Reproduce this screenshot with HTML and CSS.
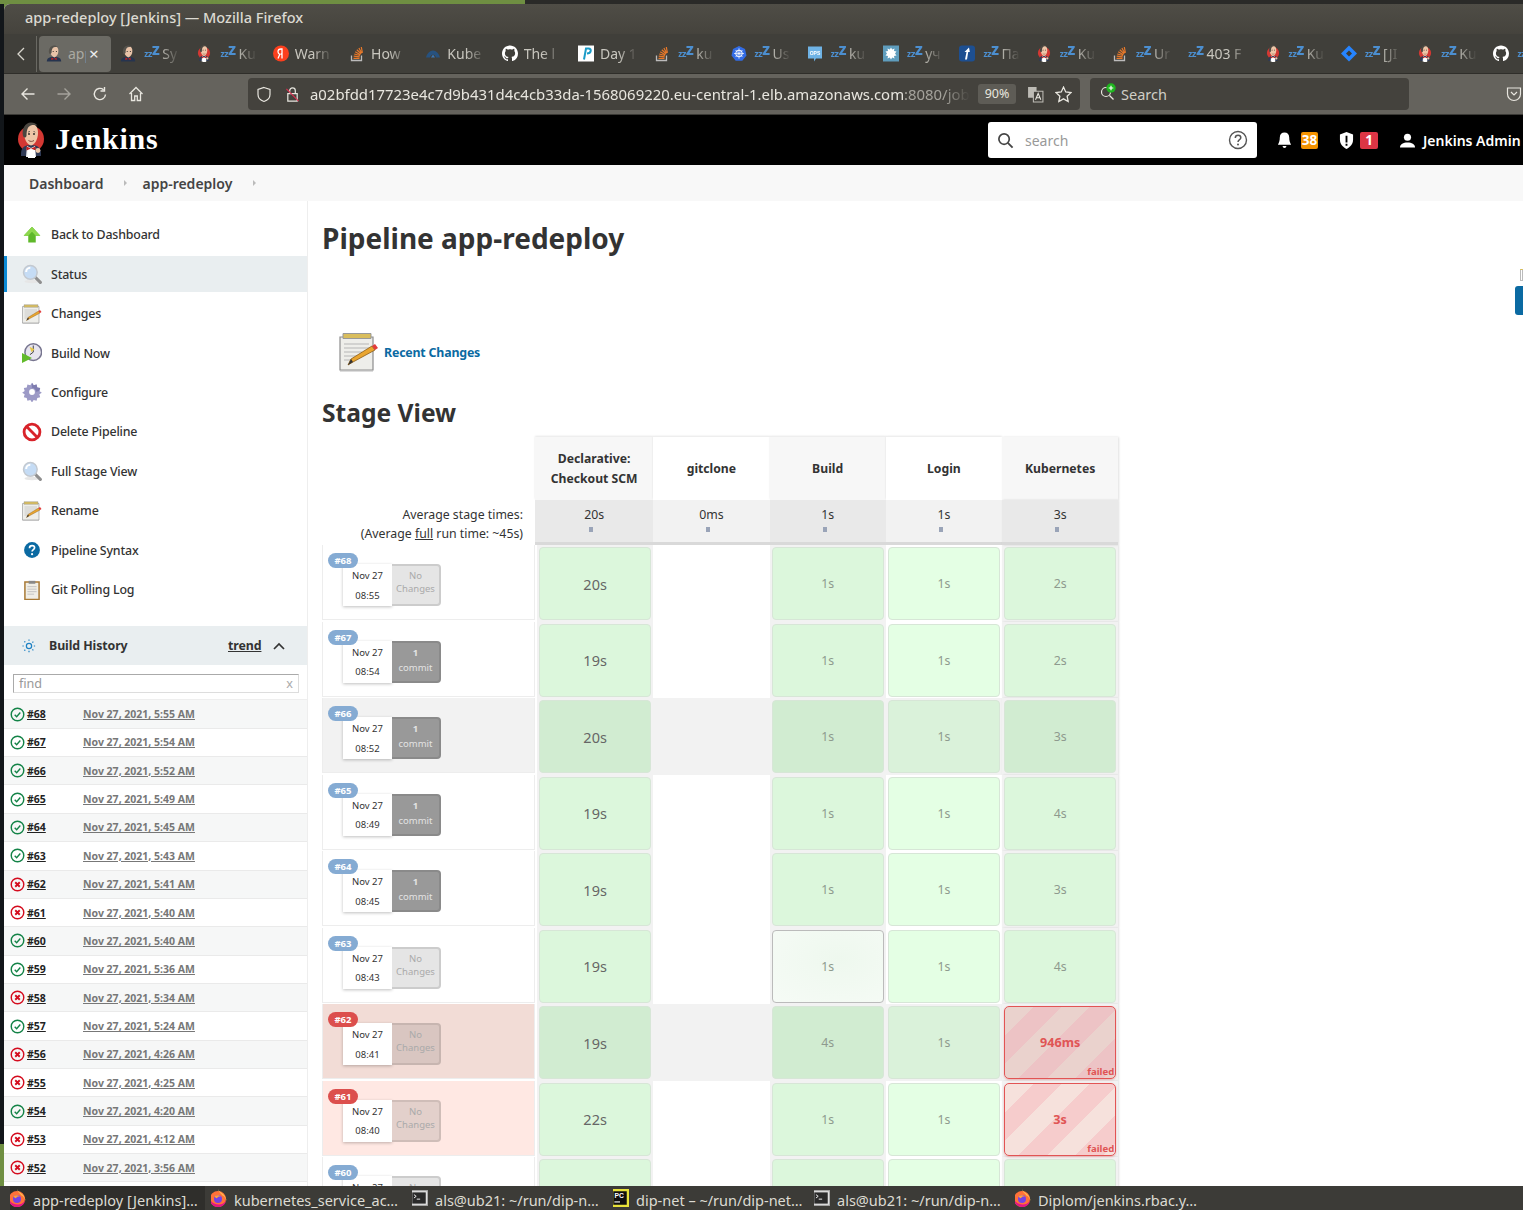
FILE: index.html
```html
<!DOCTYPE html>
<html lang="en">
<head>
<meta charset="utf-8">
<title>app-redeploy [Jenkins]</title>
<link rel="stylesheet" href="styles.css">
</head>
<body>
<svg class="defs" width="0" height="0">
  <symbol id="i-jenk" viewBox="0 0 26 36">
    <circle cx="13" cy="17" r="13" fill="#d33833"/>
    <path d="M3 32c0-6 3-9 10-9s10 3 10 9v2H3z" fill="#2f3a55"/>
    <path d="M9 24l4 2 4-2 1 11H8z" fill="#f4f4f4"/>
    <path d="M8.500 24.500l4.500 2 4.500-2v4l-4.500-2-4.500 2z" fill="#c8201f"/>
    <path d="M6 11C6 5 9 1.500 13 1.500s7 3.500 7 9.500c0 6-3 11.500-7 12.500-4-1-7-6.500-7-12.500z" fill="#eec6a8"/>
    <path d="M5 14C3.500 7 7 .5 13 .5c3 0 5 1 6.500 3-3-1-7-1-9 1.500-1.500 2-2 5-2 9-1 2-2.500 2-3.500 0z" fill="#4a4640"/>
    <path d="M10.500 18.500c1.700 1.200 3.800 1.200 5.500 0" fill="none" stroke="#7a4a3a" stroke-width="1"/>
    <path d="M12 9.500c-.8 0-1.500.3-2 .8M15.500 9.500c.8 0 1.300.3 1.700.8" stroke="#4a4640" stroke-width=".8" fill="none"/>
    <circle cx="11" cy="12" r=".9" fill="#222"/><circle cx="16" cy="12" r=".9" fill="#222"/>
    <path d="M10 28h7v8h-7z" fill="#fff"/>
    <circle cx="20" cy="28.500" r="2.400" fill="#eec6a8"/>
  </symbol>
  <symbol id="i-head" viewBox="0 0 20 20">
    <path d="M1 20c0-4 3-6 9-6s9 2 9 6z" fill="#26344f"/>
    <path d="M7 15l3 2 3-2 .5 3-3.500-1-3.500 1z" fill="#c8201f"/>
    <path d="M5 7c0-4 2-6.500 5.500-6.500S15.500 3 15.500 7c0 4-2 7-5 8-3-1-5.500-4-5.500-8z" fill="#e8c3a8"/>
    <path d="M4 10C2.500 5 5.500 0 10 0c2 0 4 .8 5 2.200-2.500-.7-5-.6-6.500 1C7.300 4.600 7 6.500 7 9c-1 1.800-2 2-3 1z" fill="#55524c"/>
    <circle cx="9" cy="7.500" r=".7" fill="#222"/><circle cx="13" cy="7.500" r=".7" fill="#222"/>
  </symbol>
  <symbol id="i-so" viewBox="0 0 16 16">
    <path d="M2.500 10v5h10v-5" fill="none" stroke="#bcbbbb" stroke-width="1.300"/>
    <path d="M4.500 12.800h6M4.700 10.700l6 .6M5.200 8.500l5.800 1.500M6.200 6.300l5.200 2.900M7.800 4.300l4.300 4M9.900 2.500l2.800 5.300M12.300 1.500l1.100 5.800" stroke="#e8792a" stroke-width="1.200" fill="none"/>
  </symbol>
  <symbol id="i-gh" viewBox="0 0 16 16">
    <path fill="#fff" d="M8 0C3.580 0 0 3.580 0 8c0 3.540 2.290 6.530 5.470 7.590.4.070.55-.17.55-.38 0-.19-.01-.82-.01-1.490-2.010.37-2.530-.49-2.690-.94-.09-.23-.48-.94-.82-1.130-.28-.15-.68-.52-.01-.53.63-.01 1.080.58 1.230.82.720 1.210 1.870.870 2.330.66.070-.52.280-.870.510-1.070-1.780-.2-3.640-.89-3.640-3.950 0-.870.310-1.590.820-2.150-.08-.2-.36-1.020.08-2.120 0 0 .67-.21 2.200.820.64-.18 1.320-.27 2-.27s1.360.09 2 .27c1.530-1.040 2.200-.82 2.200-.82.44 1.100.16 1.920.08 2.120.51.560.82 1.270.82 2.150 0 3.070-1.870 3.750-3.650 3.950.29.250.54.730.54 1.480 0 1.070-.01 1.930-.01 2.200 0 .21.150.46.550.38A8.010 8.010 0 0 0 16 8c0-4.420-3.580-8-8-8z"/>
  </symbol>
  <symbol id="i-ya" viewBox="0 0 16 16"><circle cx="8" cy="8" r="8" fill="#fc3f1d"/><path d="M9 13V3.500H8C6.200 3.500 5 4.600 5 6.200c0 1.300.6 2 1.700 2.700L5 13M9 8.500H7.600" fill="none" stroke="#fff" stroke-width="1.300"/></symbol>
  <symbol id="i-kube" viewBox="0 0 16 16"><path d="M1 12c1-4 4-7 7-7s6 3 7 7H11c-.5-2-2-3-3-3s-2.500 1-3 3z" fill="#27527f"/><path d="M8 9l-2 3h4z" fill="#3a76b5"/></symbol>
  <symbol id="i-p" viewBox="0 0 16 16"><path d="M0 0h16v16H0z" fill="#fff"/><path d="M6 14l2-11h2.500c2 0 2.500 1.300 2.200 2.500C12.300 7.300 11 8 9 8" fill="none" stroke="#1a9bc7" stroke-width="2"/></symbol>
  <symbol id="i-k8s" viewBox="0 0 16 16"><path d="M8 .5l6 2.900 1.500 6.500-4.200 5.300H4.700L.5 9.900 2 3.400z" fill="#326ce5"/><circle cx="8" cy="8" r="3.300" fill="none" stroke="#fff" stroke-width="1"/><path d="M8 2.800v10.400M3 8h10M4.500 4.500l7 7M11.500 4.500l-7 7" stroke="#fff" stroke-width=".7"/></symbol>
  <symbol id="i-ops" viewBox="0 0 16 16"><path d="M1 1h14v12H9l-2 3v-3H1z" fill="#6fb3e6"/><text x="8" y="9" font-size="5" font-weight="700" text-anchor="middle" fill="#fff" font-family="Liberation Sans">OPS</text></symbol>
  <symbol id="i-bug" viewBox="0 0 16 16"><path d="M0 0h16v16H0z" fill="#5f9dbd"/><path d="M8 2l1.200 2 2.300-1-.5 2.500 2.500.5-1.500 2 1.500 2-2.500.5.500 2.500-2.300-1L8 14l-1.200-2-2.300 1 .5-2.500L2.500 10 4 8 2.500 6 5 5.500 4.500 3l2.300 1z" fill="#fff"/></symbol>
  <symbol id="i-up" viewBox="0 0 16 16"><rect width="16" height="16" rx="3" fill="#1d4f91"/><path d="M6 14l1.500-7.500H5.500L10 2l.8 4.500H9.200L8 14z" fill="#fff"/></symbol>
  <symbol id="i-jira" viewBox="0 0 16 16"><path d="M8 0l8 8-8 8-8-8z" fill="#2684ff"/><path d="M8 5l3 3-3 3-3-3z" fill="#3c3b37"/></symbol>
  <symbol id="i-ff" viewBox="0 0 18 18">
    <circle cx="9" cy="10" r="8" fill="#ff7139"/>
    <path d="M9 0c1 2.500 3.500 3.500 5 5 2.500 2.500 3.500 5 3.500 7-1-3.500-2.500-5-4-5.500C12 4.500 9.500 3 9 0z" fill="#ffbd4f"/>
    <path d="M1 10c0 4.500 3.500 8 8 8s7-2.500 8-6c-2 2.500-4.500 3.500-7 3.500-4.500 0-8-2.500-9-5.500z" fill="#e31587"/>
    <circle cx="9" cy="10" r="4" fill="#7542e5"/>
    <path d="M5.500 7c2-1.200 4.500-1.200 6.500.6-1.800-.4-3.500 0-4 1.700C6.800 8.900 5.800 8.200 5.500 7z" fill="#ffa436"/>
  </symbol>
  <symbol id="i-term" viewBox="0 0 16 16"><rect x=".5" y="1.500" width="15" height="13" fill="#e8e8e8" stroke="#aaa"/><rect x="2" y="3" width="12" height="10" fill="#2a2a2a"/><path d="M3.500 5l2 1.500-2 1.500" stroke="#fff" fill="none" stroke-width=".8"/><path d="M6 9h3" stroke="#fff" stroke-width=".8"/></symbol>
  <symbol id="i-pc" viewBox="0 0 16 16"><path d="M0 0h16v16H0z" fill="#e8e23a"/><path d="M2 2h12v12H2z" fill="#0f0f0f"/><text x="3" y="8" font-size="6" font-weight="700" fill="#fff" font-family="Liberation Sans">PC</text><path d="M3 11.500h5" stroke="#fff" stroke-width="1"/></symbol>
  <symbol id="i-mag" viewBox="0 0 24 24">
    <ellipse cx="12" cy="21" rx="9" ry="2" fill="#e6e6e6"/>
    <path d="M15 15l7 7" stroke="#8f8f8f" stroke-width="3.800" stroke-linecap="round"/>
    <circle cx="10" cy="10" r="8.200" fill="#c5dcf5" stroke="#c3c9d0" stroke-width="1.800"/>
    <path d="M5 9.500c0-2.800 2.200-5 5-5" stroke="#fff" stroke-width="2.400" fill="none"/>
  </symbol>
  <symbol id="i-note" viewBox="0 0 40 40">
    <path d="M1 5h33v33H1z" fill="#eeeeea" stroke="#8d8d8d" stroke-width="1.200"/>
    <path d="M1 38h33v1.500H1z" fill="#bbb"/>
    <path d="M4 1.500h28v5H4z" fill="#d9bd5c" stroke="#999"/>
    <path d="M5 12h25M5 16h25M5 20h18M5 24h14M5 28h10" stroke="#b6b6b6" stroke-width="1.200"/>
    <path d="M9 33l3-6 21-13 3 4-22 12z" fill="#e9a52f" stroke="#8b5c16" stroke-width=".8"/>
    <path d="M33 14l3 4 3-2-3-4z" fill="#e23b3b"/>
    <path d="M9 33l3-6 2 3z" fill="#333"/>
  </symbol>
  <symbol id="i-ok" viewBox="0 0 16 16"><circle cx="8" cy="8" r="6.700" fill="none" stroke="#138347" stroke-width="1.500"/><path d="M5 8.200l2.100 2.100 3.900-4.400" fill="none" stroke="#138347" stroke-width="1.500"/></symbol>
  <symbol id="i-bad" viewBox="0 0 16 16"><circle cx="8" cy="8" r="6.700" fill="none" stroke="#d40c1e" stroke-width="1.500"/><path d="M5.600 5.600l4.800 4.800M10.400 5.600l-4.800 4.800" stroke="#d40c1e" stroke-width="2"/></symbol>
</svg>

<div class="window">
  <div class="titlebar">app-redeploy [Jenkins] — Mozilla Firefox</div>

  <div class="tabs">
    <div class="tab-back"><svg width="10" height="16" viewBox="0 0 10 16"><path d="M8 2L2 8l6 6" fill="none" stroke="#d8d6ce" stroke-width="1.300"/></svg></div>
    <div class="tab tab-on"><svg class="fav"><use href="#i-head"/></svg><span class="tab-t">app</span><span class="tab-x">×</span></div>
    <div class="tab"><svg class="fav"><use href="#i-head"/></svg><span class="zz">z<i>z</i><b>Z</b></span><span class="tab-t">Sy</span></div>
    <div class="tab"><svg class="fav"><use href="#i-jenk"/></svg><span class="zz">z<i>z</i><b>Z</b></span><span class="tab-t">Ku</span></div>
    <div class="tab"><svg class="fav"><use href="#i-ya"/></svg><span class="tab-t">Warn</span></div>
    <div class="tab"><svg class="fav"><use href="#i-so"/></svg><span class="tab-t">How</span></div>
    <div class="tab"><svg class="fav"><use href="#i-kube"/></svg><span class="tab-t">Kube</span></div>
    <div class="tab"><svg class="fav"><use href="#i-gh"/></svg><span class="tab-t">The l</span></div>
    <div class="tab"><svg class="fav"><use href="#i-p"/></svg><span class="tab-t">Day 1</span></div>
    <div class="tab"><svg class="fav"><use href="#i-so"/></svg><span class="zz">z<i>z</i><b>Z</b></span><span class="tab-t">ku</span></div>
    <div class="tab"><svg class="fav"><use href="#i-k8s"/></svg><span class="zz">z<i>z</i><b>Z</b></span><span class="tab-t">Us</span></div>
    <div class="tab"><svg class="fav"><use href="#i-ops"/></svg><span class="zz">z<i>z</i><b>Z</b></span><span class="tab-t">ku</span></div>
    <div class="tab"><svg class="fav"><use href="#i-bug"/></svg><span class="zz">z<i>z</i><b>Z</b></span><span class="tab-t">уч</span></div>
    <div class="tab"><svg class="fav"><use href="#i-up"/></svg><span class="zz">z<i>z</i><b>Z</b></span><span class="tab-t">Па</span></div>
    <div class="tab"><svg class="fav"><use href="#i-jenk"/></svg><span class="zz">z<i>z</i><b>Z</b></span><span class="tab-t">Ku</span></div>
    <div class="tab"><svg class="fav"><use href="#i-so"/></svg><span class="zz">z<i>z</i><b>Z</b></span><span class="tab-t">Ur</span></div>
    <div class="tab tab-nofav"><span class="zz">z<i>z</i><b>Z</b></span><span class="tab-t">403 F</span></div>
    <div class="tab"><svg class="fav"><use href="#i-jenk"/></svg><span class="zz">z<i>z</i><b>Z</b></span><span class="tab-t">Ku</span></div>
    <div class="tab"><svg class="fav"><use href="#i-jira"/></svg><span class="zz">z<i>z</i><b>Z</b></span><span class="tab-t">[JI</span></div>
    <div class="tab"><svg class="fav"><use href="#i-jenk"/></svg><span class="zz">z<i>z</i><b>Z</b></span><span class="tab-t">Ku</span></div>
    <div class="tab"><svg class="fav"><use href="#i-gh"/></svg><span class="zz">z<i>z</i><b>Z</b></span></div>
  </div>

  <div class="toolbar">
    <svg class="tb-ic" viewBox="0 0 16 16"><path d="M14.500 8H2M7.500 2.500L2 8l5.500 5.500" fill="none" stroke="#e8e6df" stroke-width="1.400"/></svg>
    <svg class="tb-ic tb-dim" viewBox="0 0 16 16"><path d="M1.500 8H14M8.500 2.500L14 8l-5.500 5.500" fill="none" stroke="#a5a39c" stroke-width="1.400"/></svg>
    <svg class="tb-ic" viewBox="0 0 16 16"><path d="M13.500 8.500A5.600 5.600 0 1 1 11.500 3.700M12.500 1v4h-4" fill="none" stroke="#e8e6df" stroke-width="1.400"/></svg>
    <svg class="tb-ic" viewBox="0 0 16 16"><path d="M1.500 8L8 1.500 14.500 8M3.500 7v7.500h3.200V10h2.600v4.500h3.200V7" fill="none" stroke="#e8e6df" stroke-width="1.300"/></svg>
    <div class="urlbar">
      <svg class="url-shield" viewBox="0 0 16 16"><path d="M8 1l6 2v5c0 4-3 6-6 7-3-1-6-3-6-7V3z" fill="none" stroke="#e8e6df" stroke-width="1.200"/></svg>
      <svg class="url-lock" viewBox="0 0 16 16"><path d="M3 7h10v8H3zM5 7V4a3 3 0 0 1 6 0v3" fill="none" stroke="#e8e6df" stroke-width="1.300"/><path d="M1.500 2l13 13" stroke="#d5304f" stroke-width="1.300"/></svg>
      <div class="url-text">a02bfdd17723e4c7d9b431d4c4cb33da-1568069220.eu-central-1.elb.amazonaws.com<span class="url-dim">:8080/job</span></div>
      <div class="url-zoom">90%</div>
      <svg class="url-tr" viewBox="0 0 16 16"><path d="M1 1h8v10H1z" fill="#bdbbb5"/><path d="M6 5h9v10H6z" fill="#44423d" stroke="#bdbbb5"/><path d="M8 13l2.500-6 2.500 6M9 11h3" fill="none" stroke="#e8e6df"/></svg>
      <svg class="url-star" viewBox="0 0 16 16"><path d="M8 1l2.100 4.600 5 .6-3.700 3.400 1 5L8 12.100 3.600 14.600l1-5L.9 6.200l5-.6z" fill="none" stroke="#e8e6df" stroke-width="1.200"/></svg>
    </div>
    <div class="searchbar">
      <svg class="sb-ic" viewBox="0 0 18 18"><circle cx="7" cy="9" r="4.500" fill="none" stroke="#e8e6df" stroke-width="1.200"/><path d="M10.500 12.500l4 4" stroke="#e8e6df" stroke-width="1.200"/><circle cx="12" cy="5" r="4.700" fill="#1fb51f"/><path d="M12 2.700v4.600M9.700 5h4.600" stroke="#fff" stroke-width="1.200"/></svg>
      <span>Search</span>
    </div>
    <svg class="tb-pocket" viewBox="0 0 16 16"><path d="M1.500 2h13v6a6.500 6.500 0 0 1-13 0z" fill="none" stroke="#e8e6df" stroke-width="1.200"/><path d="M5 6l3 3 3-3" fill="none" stroke="#e8e6df" stroke-width="1.200"/></svg>
  </div>

  <header class="jheader">
    <svg class="jlogo"><use href="#i-jenk"/></svg>
    <div class="jname">Jenkins</div>
    <div class="jsearch">
      <svg class="js-mag" viewBox="0 0 18 18"><circle cx="7.500" cy="7.500" r="5.500" fill="none" stroke="#444" stroke-width="1.800"/><path d="M11.500 11.500l5 5" stroke="#444" stroke-width="2"/></svg>
      <span class="js-ph">search</span>
      <svg class="js-help" viewBox="0 0 20 20"><circle cx="10" cy="10" r="8.500" fill="none" stroke="#555" stroke-width="1.400"/><path d="M7.300 8c0-1.700 1.200-2.700 2.800-2.700s2.700 1 2.700 2.400c0 2-2.800 2-2.800 4.300" fill="none" stroke="#555" stroke-width="1.500"/><circle cx="10" cy="14.500" r="1" fill="#555"/></svg>
    </div>
    <svg class="j-bell" viewBox="0 0 16 18"><path d="M8 1c-3 0-5 2-5 5 0 4-1 6-2 8h14c-1-2-2-4-2-8 0-3-2-5-5-5z" fill="#fff"/><path d="M6 15.500h4c0 1.500-1 2-2 2s-2-.5-2-2z" fill="#fff"/></svg>
    <span class="badge badge-or">38</span>
    <svg class="j-shield" viewBox="0 0 16 18"><path d="M8 0l7 2.500V8c0 5-3 8-7 10-4-2-7-5-7-10V2.500z" fill="#fff"/><path d="M7 4h2v7H7zM7 12.500h2v2H7z" fill="#000"/></svg>
    <span class="badge badge-red">1</span>
    <svg class="j-user" viewBox="0 0 16 16"><circle cx="8" cy="4.500" r="3.800" fill="#fff"/><path d="M0 15.500c0-4 3.500-5.500 8-5.500s8 1.500 8 5.500z" fill="#fff"/></svg>
    <span class="j-admin">Jenkins Admin</span>
  </header>

  <nav class="crumbs">
    <a class="crumb">Dashboard</a><span class="crumb-sep"></span>
    <a class="crumb">app-redeploy</a><span class="crumb-sep"></span>
  </nav>

  <div class="page">
    <aside class="side">
      <ul class="tasks">
        <li class="task"><svg class="t-ic" viewBox="0 0 24 24"><path d="M12 2l10 11h-5.500v8h-9v-8H2z" fill="#5fb82a"/><path d="M12 2l10 11h-5.500L12 8l-4.500 5H2z" fill="#8ed84e"/></svg>Back to Dashboard</li>
        <li class="task task-on"><svg class="t-ic"><use href="#i-mag"/></svg>Status</li>
        <li class="task"><svg class="t-ic"><use href="#i-note"/></svg>Changes</li>
        <li class="task"><svg class="t-ic" viewBox="0 0 24 24"><circle cx="13.500" cy="11" r="10" fill="#e7e5ef" stroke="#77758f" stroke-width="1.800"/><path d="M13.500 3V11l-4 3" fill="none" stroke="#444" stroke-width="1.200"/><path d="M9 4.500l6 3-3.500 3.500z" fill="#e8c84a"/><path d="M0 12l12 6-12 6z" fill="#62bb2b"/></svg>Build Now</li>
        <li class="task"><svg class="t-ic" viewBox="0 0 24 24"><path d="M12 1l2 3 3.500-1 .8 3.500 3.500.8-1 3.500 3 2-3 2 1 3.500-3.500.8-.8 3.500-3.500-1-2 3-2-3-3.500 1-.8-3.500-3.500-.8 1-3.500-3-2 3-2-1-3.500 3.500-.8.8-3.500 3.500 1z" fill="#9c9ac6"/><path d="M12 1l2 3 3.500-1 .8 3.500 3.500.8-1 3.500-4 1a5 5 0 0 0-5-5z" fill="#7f7db0"/><circle cx="12" cy="12" r="3.500" fill="#fff"/></svg>Configure</li>
        <li class="task"><svg class="t-ic" viewBox="0 0 24 24"><circle cx="12" cy="12" r="9.500" fill="#fff" stroke="#d8232a" stroke-width="3.400"/><path d="M5.500 5.500l13 13" stroke="#d8232a" stroke-width="3.400"/></svg>Delete Pipeline</li>
        <li class="task"><svg class="t-ic"><use href="#i-mag"/></svg>Full Stage View</li>
        <li class="task"><svg class="t-ic"><use href="#i-note"/></svg>Rename</li>
        <li class="task"><svg class="t-ic" viewBox="0 0 24 24"><circle cx="12" cy="12" r="9.500" fill="#0b6aa2"/><path d="M9 9.800c0-1.800 1.200-3 3.100-3s3 1.200 3 2.600c0 2.200-3 2.100-3 4.400" fill="none" stroke="#fff" stroke-width="2"/><circle cx="12.100" cy="17" r="1.300" fill="#fff"/></svg>Pipeline Syntax</li>
        <li class="task"><svg class="t-ic" viewBox="0 0 24 24"><path d="M3.500 2.500h17v21h-17z" fill="#f0eee6" stroke="#a97a35" stroke-width="1.800"/><path d="M8 1h8v3.500H8z" fill="#888"/><path d="M6.500 8h11M6.500 11h11M6.500 14h11M6.500 17h8" stroke="#bbb"/></svg>Git Polling Log</li>
      </ul>

      <div class="bh-head">
        <svg class="bh-ic" viewBox="0 0 16 16"><circle cx="8" cy="8" r="3" fill="none" stroke="#1f82c4" stroke-width="1.400"/><path d="M8 0.500v2M8 13.500v2M.5 8h2M13.500 8h2M2.700 2.700l1.400 1.400M11.900 11.900l1.400 1.400M2.700 13.300l1.400-1.400M11.900 4.100l1.400-1.400" stroke="#1f82c4" stroke-width="1.400" stroke-dasharray="1.500 .5"/></svg>
        <span class="bh-title">Build History</span>
        <a class="bh-trend">trend</a>
        <svg class="bh-chev" viewBox="0 0 12 8"><path d="M1 7l5-5 5 5" fill="none" stroke="#333" stroke-width="1.700"/></svg>
      </div>
      <div class="bh-find"><span>find</span><span class="bh-x">x</span></div>
      <ul class="hist">
        <li class="h-row"><svg class="h-ic"><use href="#i-ok"/></svg><a class="h-num">#68</a><a class="h-date">Nov 27, 2021, 5:55 AM</a></li>
        <li class="h-row"><svg class="h-ic"><use href="#i-ok"/></svg><a class="h-num">#67</a><a class="h-date">Nov 27, 2021, 5:54 AM</a></li>
        <li class="h-row"><svg class="h-ic"><use href="#i-ok"/></svg><a class="h-num">#66</a><a class="h-date">Nov 27, 2021, 5:52 AM</a></li>
        <li class="h-row"><svg class="h-ic"><use href="#i-ok"/></svg><a class="h-num">#65</a><a class="h-date">Nov 27, 2021, 5:49 AM</a></li>
        <li class="h-row"><svg class="h-ic"><use href="#i-ok"/></svg><a class="h-num">#64</a><a class="h-date">Nov 27, 2021, 5:45 AM</a></li>
        <li class="h-row"><svg class="h-ic"><use href="#i-ok"/></svg><a class="h-num">#63</a><a class="h-date">Nov 27, 2021, 5:43 AM</a></li>
        <li class="h-row"><svg class="h-ic"><use href="#i-bad"/></svg><a class="h-num">#62</a><a class="h-date">Nov 27, 2021, 5:41 AM</a></li>
        <li class="h-row"><svg class="h-ic"><use href="#i-bad"/></svg><a class="h-num">#61</a><a class="h-date">Nov 27, 2021, 5:40 AM</a></li>
        <li class="h-row"><svg class="h-ic"><use href="#i-ok"/></svg><a class="h-num">#60</a><a class="h-date">Nov 27, 2021, 5:40 AM</a></li>
        <li class="h-row"><svg class="h-ic"><use href="#i-ok"/></svg><a class="h-num">#59</a><a class="h-date">Nov 27, 2021, 5:36 AM</a></li>
        <li class="h-row"><svg class="h-ic"><use href="#i-bad"/></svg><a class="h-num">#58</a><a class="h-date">Nov 27, 2021, 5:34 AM</a></li>
        <li class="h-row"><svg class="h-ic"><use href="#i-ok"/></svg><a class="h-num">#57</a><a class="h-date">Nov 27, 2021, 5:24 AM</a></li>
        <li class="h-row"><svg class="h-ic"><use href="#i-bad"/></svg><a class="h-num">#56</a><a class="h-date">Nov 27, 2021, 4:26 AM</a></li>
        <li class="h-row"><svg class="h-ic"><use href="#i-bad"/></svg><a class="h-num">#55</a><a class="h-date">Nov 27, 2021, 4:25 AM</a></li>
        <li class="h-row"><svg class="h-ic"><use href="#i-ok"/></svg><a class="h-num">#54</a><a class="h-date">Nov 27, 2021, 4:20 AM</a></li>
        <li class="h-row"><svg class="h-ic"><use href="#i-bad"/></svg><a class="h-num">#53</a><a class="h-date">Nov 27, 2021, 4:12 AM</a></li>
        <li class="h-row"><svg class="h-ic"><use href="#i-bad"/></svg><a class="h-num">#52</a><a class="h-date">Nov 27, 2021, 3:56 AM</a></li>
      </ul>
    </aside>

    <main class="main">
      <h1 class="m-title">Pipeline app-redeploy</h1>
      <div class="m-edge"><span class="m-edge-a"></span><span class="m-edge-b"></span></div>
      <div class="m-recent"><svg class="m-note"><use href="#i-note"/></svg><a class="m-link">Recent Changes</a></div>
      <h2 class="m-h2">Stage View</h2>

      <div class="stage">
        <div class="s-head">
          <div class="sh-blank"></div>
          <div class="sh sh-o sh-first">Declarative:<br>Checkout SCM</div>
          <div class="sh">gitclone</div>
          <div class="sh sh-o">Build</div>
          <div class="sh">Login</div>
          <div class="sh sh-o">Kubernetes</div>
        </div>
        <div class="s-avg">
          <div class="sa-label">Average stage times:<br>(Average <u>full</u> run time: ~45s)</div>
          <div class="sa sa-o sa-first">20s<i class="sliver"></i></div>
          <div class="sa">0ms<i class="sliver"></i></div>
          <div class="sa sa-o">1s<i class="sliver"></i></div>
          <div class="sa">1s<i class="sliver"></i></div>
          <div class="sa sa-o">3s<i class="sliver"></i></div>
        </div>

        <div class="s-row">
          <div class="r-head"><span class="r-badge">#68</span><div class="r-card"><div class="r-date">Nov 27<br>08:55</div><div class="r-none">No<br>Changes</div></div></div>
          <div class="col col-o"><div class="cell cell-a big">20s</div></div><div class="col"></div>
          <div class="col col-o"><div class="cell cell-a">1s</div></div><div class="col"><div class="cell cell-b">1s</div></div>
          <div class="col col-o"><div class="cell cell-a">2s</div></div>
        </div>
        <div class="s-row">
          <div class="r-head"><span class="r-badge">#67</span><div class="r-card"><div class="r-date">Nov 27<br>08:54</div><div class="r-commit"><b>1</b><br>commit</div></div></div>
          <div class="col col-o"><div class="cell cell-a big">19s</div></div><div class="col"></div>
          <div class="col col-o"><div class="cell cell-a">1s</div></div><div class="col"><div class="cell cell-b">1s</div></div>
          <div class="col col-o"><div class="cell cell-a">2s</div></div>
        </div>
        <div class="s-row row-hover">
          <div class="r-head"><span class="r-badge">#66</span><div class="r-card"><div class="r-date">Nov 27<br>08:52</div><div class="r-commit"><b>1</b><br>commit</div></div></div>
          <div class="col col-o"><div class="cell cell-a big">20s</div></div><div class="col"></div>
          <div class="col col-o"><div class="cell cell-a">1s</div></div><div class="col"><div class="cell cell-b">1s</div></div>
          <div class="col col-o"><div class="cell cell-a">3s</div></div>
        </div>
        <div class="s-row">
          <div class="r-head"><span class="r-badge">#65</span><div class="r-card"><div class="r-date">Nov 27<br>08:49</div><div class="r-commit"><b>1</b><br>commit</div></div></div>
          <div class="col col-o"><div class="cell cell-a big">19s</div></div><div class="col"></div>
          <div class="col col-o"><div class="cell cell-a">1s</div></div><div class="col"><div class="cell cell-b">1s</div></div>
          <div class="col col-o"><div class="cell cell-a">4s</div></div>
        </div>
        <div class="s-row">
          <div class="r-head"><span class="r-badge">#64</span><div class="r-card"><div class="r-date">Nov 27<br>08:45</div><div class="r-commit"><b>1</b><br>commit</div></div></div>
          <div class="col col-o"><div class="cell cell-a big">19s</div></div><div class="col"></div>
          <div class="col col-o"><div class="cell cell-a">1s</div></div><div class="col"><div class="cell cell-b">1s</div></div>
          <div class="col col-o"><div class="cell cell-a">3s</div></div>
        </div>
        <div class="s-row">
          <div class="r-head"><span class="r-badge">#63</span><div class="r-card"><div class="r-date">Nov 27<br>08:43</div><div class="r-none">No<br>Changes</div></div></div>
          <div class="col col-o"><div class="cell cell-a big">19s</div></div><div class="col"></div>
          <div class="col col-o"><div class="cell cell-h">1s</div></div><div class="col"><div class="cell cell-b">1s</div></div>
          <div class="col col-o"><div class="cell cell-a">4s</div></div>
        </div>
        <div class="s-row row-fail-h">
          <div class="r-head"><span class="r-badge r-badge-f">#62</span><div class="r-card"><div class="r-date">Nov 27<br>08:41</div><div class="r-none">No<br>Changes</div></div></div>
          <div class="col col-o"><div class="cell cell-a big">19s</div></div><div class="col"></div>
          <div class="col col-o"><div class="cell cell-a">4s</div></div><div class="col"><div class="cell cell-b">1s</div></div>
          <div class="col col-o"><div class="cell cell-f">946ms<span class="failed">failed</span></div></div>
        </div>
        <div class="s-row row-fail">
          <div class="r-head"><span class="r-badge r-badge-f">#61</span><div class="r-card"><div class="r-date">Nov 27<br>08:40</div><div class="r-none">No<br>Changes</div></div></div>
          <div class="col col-o"><div class="cell cell-a big">22s</div></div><div class="col"></div>
          <div class="col col-o"><div class="cell cell-a">1s</div></div><div class="col"><div class="cell cell-b">1s</div></div>
          <div class="col col-o"><div class="cell cell-f">3s<span class="failed">failed</span></div></div>
        </div>
        <div class="s-row">
          <div class="r-head"><span class="r-badge">#60</span><div class="r-card"><div class="r-date">Nov 27<br>08:39</div><div class="r-none">No<br>Changes</div></div></div>
          <div class="col col-o"><div class="cell cell-a big">19s</div></div><div class="col"></div>
          <div class="col col-o"><div class="cell cell-a">1s</div></div><div class="col"><div class="cell cell-b">1s</div></div>
          <div class="col col-o"><div class="cell cell-a">3s</div></div>
        </div>
      </div>
    </main>
  </div>
</div>

<footer class="taskbar">
  <div class="tk tk-on"><svg class="tk-ic"><use href="#i-ff"/></svg><span>app-redeploy [Jenkins]…</span></div>
  <div class="tk"><svg class="tk-ic"><use href="#i-ff"/></svg><span>kubernetes_service_ac…</span></div>
  <div class="tk"><svg class="tk-ic"><use href="#i-term"/></svg><span>als@ub21: ~/run/dip-n…</span></div>
  <div class="tk"><svg class="tk-ic"><use href="#i-pc"/></svg><span>dip-net – ~/run/dip-net…</span></div>
  <div class="tk"><svg class="tk-ic"><use href="#i-term"/></svg><span>als@ub21: ~/run/dip-n…</span></div>
  <div class="tk"><svg class="tk-ic"><use href="#i-ff"/></svg><span>Diplom/jenkins.rbac.y…</span></div>
</footer>
</body>
</html>
```
FILE: styles.css
```css
* { box-sizing: border-box; }
html, body { margin: 0; height: 100%; }
body {
  height: 1210px; width: 1523px; overflow: hidden;
  display: flex; flex-direction: column;
  font-family: "Noto Sans", "Open Sans", sans-serif;
  background: #6f8f42;
  color: #333;
}
.defs { position: absolute; }
ul { list-style: none; margin: 0; padding: 0; }
a { color: inherit; }

.window {
  flex: 1; min-height: 0; margin: 4px 0 0 4px;
  display: flex; flex-direction: column; overflow: hidden;
  background: #fff;
  border-top-left-radius: 6px;
}
body::before {
  content: ""; position: absolute; left: 525px; right: 0; top: 0; height: 4px; background: #2a2a28;
}
body::after {
  content: ""; position: absolute; left: 0; width: 4px; top: 4px; height: 1140px; background: #12161a;
}

.titlebar {
  height: 30px; flex: none; padding-left: 21px;
  background: linear-gradient(#4f4d46, #45433d);
  color: #dcdad2; font-size: 14.500px; line-height: 27px; font-weight: 500; white-space: nowrap;
}

.tabs {
  height: 40px; flex: none; display: flex; align-items: center;
  background: #403f3a; border-bottom: 1px solid #2f2e2a;
}
.tab-back {
  width: 33px; flex: none; height: 36px; padding-left: 12px;
  display: flex; align-items: center;
  border-right: 1px solid #6a6963;
}
.tab {
  width: 76.300px; flex: none; height: 36px; padding: 0 2px 0 7px;
  display: flex; align-items: center; overflow: hidden; white-space: nowrap;
  color: #c8c6be; font-size: 14px;
  -webkit-mask-image: linear-gradient(90deg, #000 62%, transparent 88%);
  mask-image: linear-gradient(90deg, #000 62%, transparent 88%);
}
.tab-nofav { padding-left: 5px; }
.tab-on {
  background: #6b6a64; border-radius: 4px; width: 72px; margin: 0 2.150px 0 2px;
  -webkit-mask-image: none; mask-image: none; position: relative;
}
.fav { width: 16px; height: 17px; flex: none; margin-right: 6px; }
.zz { color: #4c8fd0; font-size: 8px; font-weight: 700; line-height: 1; flex: none; margin-right: 3px; margin-left: 2px; align-self: center; letter-spacing: -.4px; }
.zz i { font-style: normal; font-size: 9.500px; }
.zz b { font-size: 12.500px; position: relative; top: -2px; }
.tab-t { overflow: hidden; }
.tab-on .tab-t { width: 18px; color: #aaa9a2; flex: none; }
.tab-x { color: #eee; font-size: 17px; margin-left: 3px; line-height: 1; }

.toolbar {
  height: 41px; flex: none; display: flex; align-items: center;
  padding-left: 16px;
  background: #65635d; border-bottom: 1px solid #3a3935;
}
.tb-ic { width: 16px; height: 16px; flex: none; margin-right: 20px; }
.urlbar {
  width: 832px; height: 32px; margin-left: 84px; flex: none;
  display: flex; align-items: center;
  background: #44423d; border-radius: 4px; padding: 0 8px;
  color: #e8e6df; font-size: 14.900px;
}
.url-shield { width: 16px; height: 17px; flex: none; }
.url-lock { width: 15px; height: 17px; flex: none; margin-left: 13px; }
.url-text { flex: none; width: 660px; margin-left: 10px; overflow: hidden; white-space: nowrap;
  -webkit-mask-image: linear-gradient(90deg, #000 96%, transparent 100%);
  mask-image: linear-gradient(90deg, #000 96%, transparent 100%);
}
.url-dim { color: #a5a39c; }
.url-zoom { width: 38px; height: 20px; margin-left: 8px; flex: none; background: #5e5c56; border-radius: 3px; font-size: 12.500px; text-align: center; line-height: 20px; }
.url-tr { width: 17px; height: 17px; flex: none; margin-left: 11px; }
.url-star { width: 17px; height: 17px; flex: none; margin-left: 11px; }
.searchbar {
  width: 319px; height: 32px; margin-left: 10px; flex: none;
  display: flex; align-items: center; padding-left: 9px;
  background: #44423d; border-radius: 4px; color: #d0cec6; font-size: 14.500px;
}
.sb-ic { width: 18px; height: 18px; margin-right: 4px; position: relative; top: -2px; }
.tb-pocket { width: 16px; height: 16px; margin-left: 97px; flex: none; }

.jheader {
  height: 50px; flex: none; display: flex; align-items: center;
  background: #000; color: #fff; padding-left: 14px;
}
.jlogo { width: 26px; height: 36px; flex: none; }
.jname {
  margin-left: 11px; width: 933px; flex: none;
  font-family: "Liberation Serif", serif; font-weight: 700; font-size: 30px; letter-spacing: .7px; line-height: 34px; margin-top: -2px;
}
.jsearch {
  width: 269px; height: 36px; flex: none; background: #fff; border-radius: 3px;
  display: flex; align-items: center; padding-left: 9px;
}
.js-mag { width: 17px; height: 17px; flex: none; }
.js-ph { color: #999; font-size: 14px; margin-left: 11px; width: 202px; flex: none; }
.js-help { width: 20px; height: 20px; flex: none; margin-left: 1px; }
.j-bell { width: 15px; height: 18px; margin-left: 20px; flex: none; }
.badge { height: 17px; border-radius: 2px; color: #fff; font-weight: 700; font-size: 13.500px; line-height: 17px; text-align: center; flex: none; }
.badge-or { width: 17px; background: #f59300; margin-left: 9px; }
.j-shield { width: 15px; height: 19px; margin-left: 21px; flex: none; }
.badge-red { width: 18px; background: #dc3545; margin-left: 6px; }
.j-user { width: 15px; height: 15px; margin-left: 22px; flex: none; }
.j-admin { margin-left: 8px; font-size: 14px; font-weight: 600; white-space: nowrap; }

.crumbs {
  height: 36px; flex: none; display: flex; align-items: center;
  padding-left: 25px; background: #f8f8f8; color: #444; font-size: 14px; font-weight: 600;
}
.crumb-sep { width: 0; height: 0; border: 3px solid transparent; border-left: 3px solid #bbb; margin: 0 12px 0 21px; }
.crumb-sep:last-child { margin-left: 21px; }

.page { flex: 1; min-height: 0; display: flex; overflow: hidden; }
.side { width: 304px; flex: none; border-right: 1px solid #eee; display: flex; flex-direction: column; }
.tasks { padding-top: 14px; }
.task {
  height: 39.450px; display: flex; align-items: center; padding-left: 18px;
  font-size: 12.400px; letter-spacing: -.18px; font-weight: 500; color: #333; white-space: nowrap;
}
.t-ic { width: 20px; height: 20px; flex: none; margin-right: 9px; }
.task-on { background: linear-gradient(#e9eef0, #e9eef0) no-repeat 0 1.500px / 100% 36px; position: relative; }
.task-on::before { content: ""; position: absolute; left: 0; top: 1.500px; height: 36px; width: 3px; background: #0b8ad6; }

.bh-head {
  height: 39px; margin-top: 17px; flex: none; display: flex; align-items: center;
  background: #e9eef0; padding-left: 18px; font-size: 12.400px; letter-spacing: -.1px; font-weight: 700;
}
.bh-ic { width: 14px; height: 14px; flex: none; }
.bh-title { margin-left: 13px; width: 179px; flex: none; color: #333; }
.bh-trend { text-decoration: underline; width: 45px; flex: none; }
.bh-chev { width: 12px; height: 8px; flex: none; margin-left: 0; }
.bh-find {
  margin: 9px 8px 6px 9px; height: 19px; flex: none;
  display: flex; justify-content: space-between; align-items: center;
  padding: 0 5px; font-size: 12.600px; color: #999;
  border: 1px solid #ddd; border-top-color: #aaa; border-left-color: #aaa;
}
.bh-x { color: #aaa; }
.hist { border-top: 1px solid #eee; }
.h-row {
  height: 28.360px; display: flex; align-items: center; padding-left: 6px;
  border-bottom: 1px solid #eaeaea; font-size: 10.500px; font-weight: 700;
}
.h-row:nth-child(odd) { background: #f6f7f7; }
.h-ic { width: 15px; height: 15px; flex: none; margin-right: 2px; }
.h-num { width: 56px; text-decoration: underline; color: #222; flex: none; }
.h-date { text-decoration: underline; color: #777; white-space: nowrap; }

.main { flex: 1; min-width: 0; position: relative; padding-left: 14px; overflow: hidden; }
.m-title { margin: 18px 0 0; font-size: 28px; line-height: 38px; font-weight: 700; color: #333; white-space: nowrap; }
.m-edge { position: absolute; right: 0; top: 68px; width: 8px; }
.m-edge-a { display: block; height: 12px; border: 1px solid #bbb; border-top-color: #e0c040; margin-left: 5px; }
.m-edge-b { display: block; height: 29px; margin-top: 5px; background: #0b6aa2; border-radius: 3px 0 0 3px; }
.m-recent { display: flex; align-items: center; margin-top: 74px; padding-left: 17px; height: 41px; }
.m-note { width: 40px; height: 40px; flex: none; margin-right: 5px; }
.m-link { color: #0b6aa2; font-size: 12.400px; letter-spacing: -.2px; font-weight: 700; position: relative; top: 1px; }
.m-h2 { margin: 24px 0 0; font-size: 24.600px; line-height: 34px; font-weight: 700; color: #333; }

.stage { margin-top: 7px; width: 797px; }
.s-head, .s-avg, .s-row { display: grid; grid-template-columns: 215px repeat(5, 116.250px); }
.sh {
  height: 63px; display: flex; align-items: center; justify-content: center; text-align: center;
  font-size: 12.200px; font-weight: 700; line-height: 19.500px; color: #333;
  background: #fff; box-shadow: 0 -1px 2px rgba(0,0,0,.1);
}
.sh-o { background: #f7f7f7; }
.sh-first, .sa-first { margin-left: -2px; }
.s-avg { height: 45.300px; }
.sa-label { text-align: right; padding: 5px 14px 0 0; font-size: 12.300px; line-height: 19px; color: #333; white-space: nowrap; margin-left: -20px; }
.sa {
  background: #f2f2f2; font-size: 12.300px; color: #333; text-align: center; padding-top: 6px; line-height: 18px;
  border-bottom: 3px solid #d9d9d9; position: relative;
}
.sa-o { background: #e9e9e9; }
.sliver { display: block; width: 4px; height: 5px; background: #9aa4b8; margin: 3px auto 0; position: relative; left: -3px; }
.s-row { height: 76.500px; }
.r-head {
  position: relative; margin: 0 2px 1.400px 0; background: #fff;
  border: 1px solid #ededed; border-top: 0;
}
.r-badge {
  position: absolute; left: 5px; top: 8px; height: 15px; width: 30px; border-radius: 8px;
  background: #85abd3; color: #fff; font-size: 9.500px; font-weight: 700; text-align: center; line-height: 15px; z-index: 1;
}
.r-badge-f { background: #dc4f4d; }
.r-card { position: absolute; left: 20px; top: 19px; width: 98px; height: 42px; display: flex; font-size: 9.500px; text-align: center; }
.r-date { width: 49px; background: #fff; color: #333; line-height: 19.500px; padding-top: 2px; box-shadow: 0 1px 3px rgba(0,0,0,.25); }
.r-none, .r-commit { width: 49px; border: 2px solid #ccc; border-left: 0; border-radius: 0 4px 4px 0; line-height: 13px; padding-top: 3px; }
.r-none { background: #e5e5e5; color: #aaa; }
.r-commit { background: #999; border-color: #8a8a8a; color: #e3e3e3; line-height: 15px; padding-top: 2px; }
.col { background: #fff; padding: 2px 2px 1.400px; }
.col-o { background: #f2f2f2; }
.s-row .col:last-child, .sa:last-child, .sh:last-child { box-shadow: 1px 0 2px rgba(0,0,0,.12); }
.cell {
  height: 100%; border: 1px solid #d7e6d7; border-radius: 4px;
  display: flex; align-items: center; justify-content: center;
  font-size: 12.300px; color: #8e9a8e; position: relative;
}
.cell-a { background: #dcf7dc; }
.cell-b { background: #e4ffe4; }
.big { font-size: 14.500px; color: #666; }
.cell-h { background: radial-gradient(ellipse at 60% 40%, #eef8ee, #f6fbf6); border-color: #bbb; }
.cell-f {
  border: 1.500px solid #e25454; border-radius: 5px; color: #e05555; font-weight: 700; font-size: 12.600px;
  box-shadow: 0 1px 2px rgba(220,80,80,.4);
  background: repeating-linear-gradient(135deg, #f6e1dc 0 20px, #f6cccc 20px 40px);
}
.failed { position: absolute; right: 1px; bottom: 0; font-size: 9.600px; line-height: 13px; }
.row-hover .r-head { background: #f2f2f2; }
.row-hover .col { background: #f2f2f2; }
.row-hover .cell-a { background: #d1ecd1; }
.row-hover .cell-b { background: #daf2da; }
.row-fail .r-head { background: #ffe8e3; }
.row-fail .r-none { background: #e3d0cb; border-color: #cfbdb8; }
.row-fail-h .r-head { background: #f2dcd6; }
.row-fail-h .col { background: #f2f2f2; }
.row-fail-h .cell-a { background: #d1ecd1; }
.row-fail-h .cell-b { background: #daf2da; }
.row-fail-h .r-none { background: #d9c6c1; border-color: #c7b5b0; }
.row-fail-h .cell-f { background: repeating-linear-gradient(135deg, #ead2cd 0 20px, #edc3c5 20px 40px); }

.taskbar {
  height: 24px; flex: none; display: flex; padding-left: 10px;
  background: #3c3b37; color: #dddbd3; font-size: 14.500px; white-space: nowrap;
}
.tk { width: 201px; flex: none; display: flex; align-items: center; overflow: hidden; }
.tk span { position: relative; top: 2px; }
.tk-on { background: #2f2e2b; width: 195px; margin-right: 6px; }
.tk-ic { width: 18px; height: 18px; flex: none; margin-right: 7px; margin-left: -2px; }
```
